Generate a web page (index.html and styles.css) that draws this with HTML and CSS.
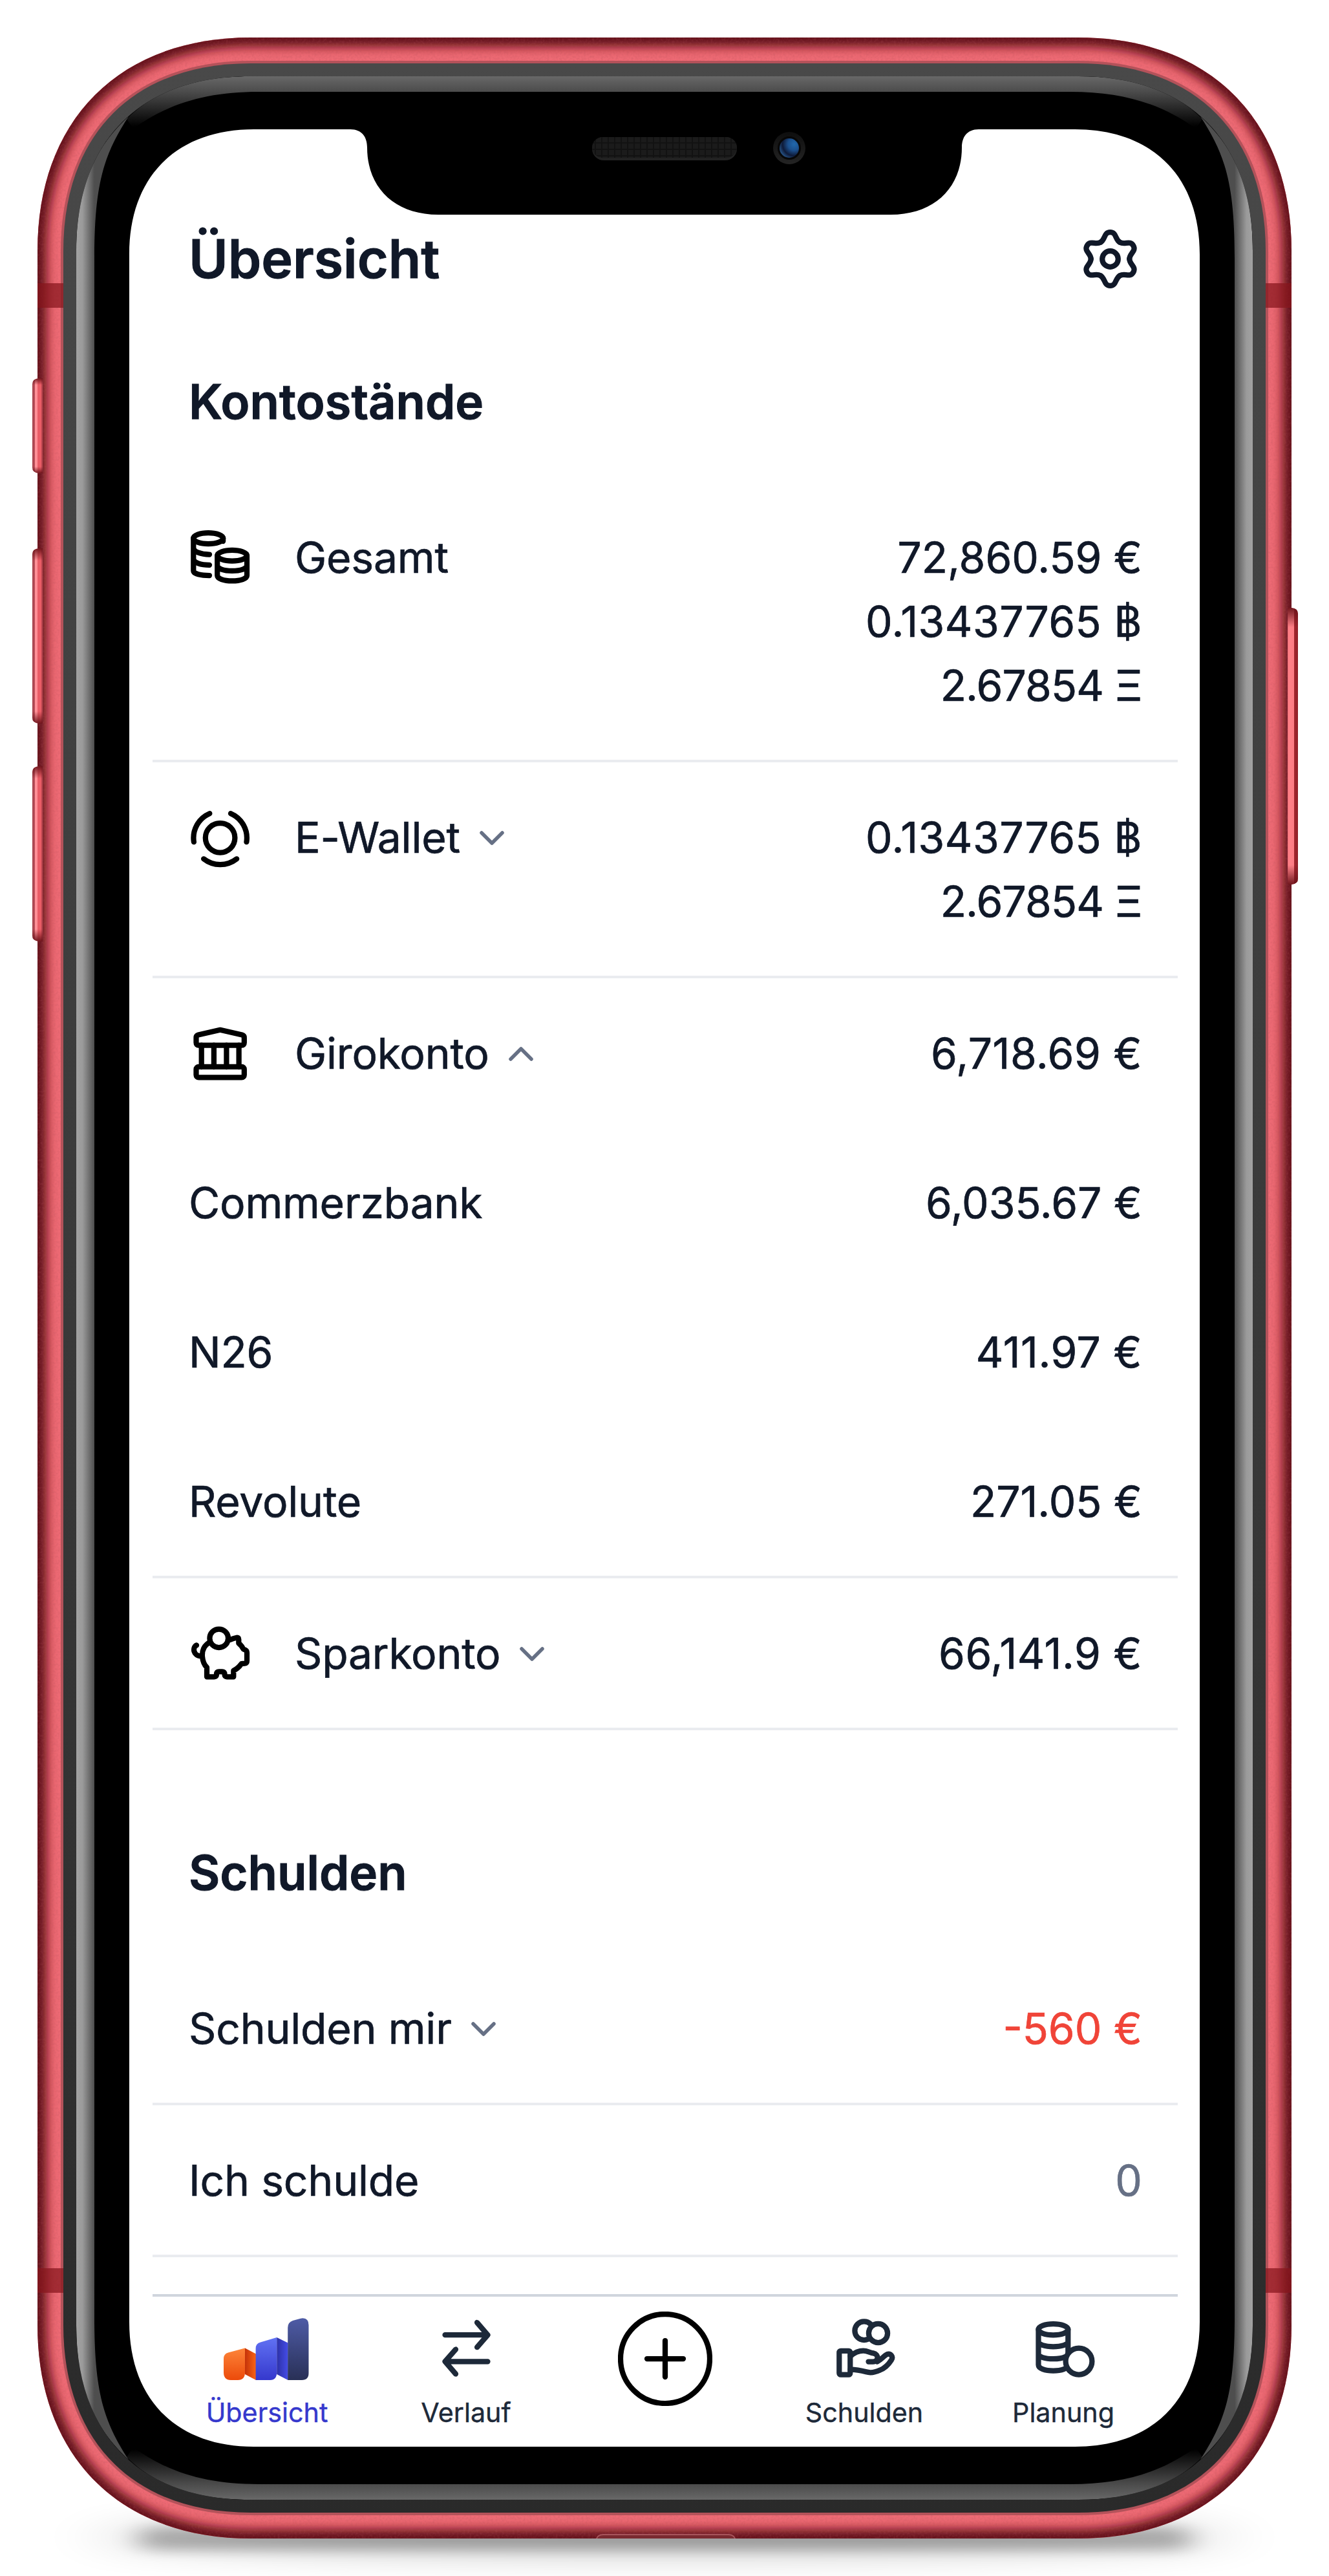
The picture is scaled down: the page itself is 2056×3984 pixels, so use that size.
FILE: index.html
```html
<!DOCTYPE html>
<html lang="de">
<head>
<meta charset="utf-8">
<title>Übersicht</title>
<link rel="stylesheet" href="styles.css">
</head>
<body>
<div class="device">
  <svg class="device-frame" viewBox="0 0 2056 3984" aria-hidden="true">
    <defs>
      <path id="outer" d="M388 58H1668C1871 58 1998 185 1998 388V3596C1998 3799 1871 3926 1668 3926H388C185 3926 58 3799 58 3596V388C58 185 185 58 388 58Z"/>
      <path id="bezel" d="M388 98H1668C1849 98 1958 207 1958 388V3596C1958 3777 1849 3886 1668 3886H388C207 3886 98 3777 98 3596V388C98 207 207 98 388 98Z"/>
      <path id="rim" d="M388 118H1668C1839 118 1938 217 1938 388V3596C1938 3767 1839 3866 1668 3866H388C217 3866 118 3767 118 3596V388C118 217 217 118 388 118Z"/>
      <clipPath id="outerClip"><use href="#outer"/></clipPath>
      <clipPath id="rimClip"><use href="#rim"/></clipPath>
      <filter id="soft" x="-5%" y="-5%" width="110%" height="110%"><feGaussianBlur stdDeviation="8"/></filter>
      <filter id="shadowNear" x="-10%" y="-200%" width="120%" height="500%"><feGaussianBlur stdDeviation="22 9"/></filter>
      <filter id="shadowFar" x="-20%" y="-200%" width="140%" height="500%"><feGaussianBlur stdDeviation="50 24"/></filter>
      <filter id="grain" x="0" y="0" width="100%" height="100%">
        <feTurbulence type="fractalNoise" baseFrequency="0.3" numOctaves="2" seed="4"/>
        <feColorMatrix values="0 0 0 0 0.45  0 0 0 0 0.08  0 0 0 0 0.1  1.6 0 0 0 -0.65"/>
      </filter>
      <linearGradient id="bezelFill" x1="0" y1="0" x2="0" y2="1"><stop offset="0" stop-color="#494949"/><stop offset="1" stop-color="#2a2a2a"/></linearGradient>
      <linearGradient id="glareLeft" gradientUnits="userSpaceOnUse" x1="118" y1="0" x2="146" y2="0"><stop offset="0" stop-color="#a2a2a2"/><stop offset=".35" stop-color="#9a9a9a"/><stop offset="1" stop-color="#4e4e4e"/></linearGradient>
      <linearGradient id="glareRight" gradientUnits="userSpaceOnUse" x1="1938" y1="0" x2="1910" y2="0"><stop offset="0" stop-color="#a2a2a2"/><stop offset=".35" stop-color="#9a9a9a"/><stop offset="1" stop-color="#4e4e4e"/></linearGradient>
      <linearGradient id="glareTop" gradientUnits="userSpaceOnUse" x1="0" y1="118" x2="0" y2="196"><stop offset="0" stop-color="#686868"/><stop offset=".32" stop-color="#4a4a4a"/><stop offset="1" stop-color="#000"/></linearGradient>
      <linearGradient id="glareBottom" gradientUnits="userSpaceOnUse" x1="0" y1="3866" x2="0" y2="3788"><stop offset="0" stop-color="#686868"/><stop offset=".32" stop-color="#4a4a4a"/><stop offset="1" stop-color="#000"/></linearGradient>
      <linearGradient id="keyLeft" x1="0" y1="0" x2="1" y2="0"><stop offset="0" stop-color="#a5404a"/><stop offset=".22" stop-color="#b8505a"/><stop offset=".26" stop-color="#ff9299"/><stop offset=".48" stop-color="#ff8f96"/><stop offset=".52" stop-color="#ea5c66"/><stop offset=".85" stop-color="#ea5c66"/><stop offset=".9" stop-color="#b9454e"/><stop offset="1" stop-color="#b9454e"/></linearGradient>
      <linearGradient id="keyRight" x1="0" y1="0" x2="1" y2="0"><stop offset="0" stop-color="#f0737b"/><stop offset=".15" stop-color="#ff8087"/><stop offset=".6" stop-color="#fb7c84"/><stop offset=".63" stop-color="#a3262e"/><stop offset="1" stop-color="#8f2028"/></linearGradient>
      <linearGradient id="keyEnds" x1="0" y1="0" x2="0" y2="1"><stop offset="0" stop-color="#6b1219" stop-opacity=".95"/><stop offset=".07" stop-color="#6b1219" stop-opacity="0"/><stop offset=".93" stop-color="#6b1219" stop-opacity="0"/><stop offset="1" stop-color="#6b1219" stop-opacity=".95"/></linearGradient>
      <radialGradient id="lens" cx=".75" cy=".3" r=".8"><stop offset="0" stop-color="#2168ac"/><stop offset=".4" stop-color="#1c4f8c"/><stop offset=".75" stop-color="#0e1a38"/><stop offset="1" stop-color="#255082"/></radialGradient>
      <linearGradient id="ring" x1="0" y1="0" x2="0" y2="1"><stop offset="0" stop-color="#0e0e0e"/><stop offset="1" stop-color="#242424"/></linearGradient>
      <pattern id="mesh" width="10" height="10" patternUnits="userSpaceOnUse"><rect width="10" height="10" fill="#1b1b1b"/><path d="M0 0H10M0 0V10" stroke="#121212" stroke-width="4"/></pattern>
    </defs>

    <ellipse cx="1028" cy="3924" rx="880" ry="30" fill="#000" opacity=".2" filter="url(#shadowFar)"/>
    <rect x="215" y="3908" width="1626" height="36" rx="16" fill="#000" opacity=".26" filter="url(#shadowNear)"/>

    <use href="#outer" fill="#ee6a74"/>
    <g clip-path="url(#outerClip)">
      <use href="#outer" fill="none" stroke="#5f0d15" stroke-width="28" filter="url(#soft)"/>
      <rect width="2056" height="3984" filter="url(#grain)" opacity=".3"/>
      <use href="#bezel" fill="none" stroke="#b4525a" stroke-width="8"/>
      <path d="M58 438h42v38H58zM1956 438h42v38h-42zM58 3508h42v38H58zM1956 3508h42v38h-42z" fill="#86151c" opacity=".72"/>
      <rect x="923" y="3920" width="214" height="14" rx="10" fill="#7a2a30" stroke="#a8555c" stroke-width="2"/>
    </g>
    <use href="#bezel" fill="url(#bezelFill)"/>
    <use href="#rim"/>
    <g clip-path="url(#rimClip)">
      <path d="M388 118C300 118 240 140 196 184L206 199C260 160 320 142 400 142H1656C1736 142 1796 160 1850 199L1860 184C1816 140 1756 118 1668 118Z" fill="url(#glareTop)"/>
      <path d="M388 3866C300 3866 240 3844 196 3800L206 3785C260 3824 320 3842 400 3842H1656C1736 3842 1796 3824 1850 3785L1860 3800C1816 3844 1756 3866 1668 3866Z" fill="url(#glareBottom)"/>
      <path d="M118 388C118 290 145 230 199 180C160 240 146 285 146 400V3584C146 3699 160 3744 199 3804C145 3754 118 3694 118 3596Z" fill="url(#glareLeft)"/>
      <path d="M1938 388C1938 290 1911 230 1857 180C1896 240 1910 285 1910 400V3584C1910 3699 1896 3744 1857 3804C1911 3754 1938 3694 1938 3596Z" fill="url(#glareRight)"/>
    </g>

    <g>
      <path d="M66 585H60Q50 586 50 594V723Q50 731 60 732H66Z" fill="url(#keyLeft)"/>
      <path d="M66 585H60Q50 586 50 594V723Q50 731 60 732H66Z" fill="url(#keyEnds)"/>
      <path d="M66 848H60Q50 849 50 857V1110Q50 1118 60 1119H66Z" fill="url(#keyLeft)"/>
      <path d="M66 848H60Q50 849 50 857V1110Q50 1118 60 1119H66Z" fill="url(#keyEnds)"/>
      <path d="M66 1185H60Q50 1186 50 1194V1447Q50 1455 60 1456H66Z" fill="url(#keyLeft)"/>
      <path d="M66 1185H60Q50 1186 50 1194V1447Q50 1455 60 1456H66Z" fill="url(#keyEnds)"/>
      <path d="M1992 940H1998Q2008 941 2008 949V1359Q2008 1367 1998 1368H1992Z" fill="url(#keyRight)"/>
      <path d="M1992 940H1998Q2008 941 2008 949V1359Q2008 1367 1998 1368H1992Z" fill="url(#keyEnds)"/>
    </g>

    <path d="M393 200H542C560 200 568 212 568 228C568 290 610 332 678 332H1378C1446 332 1488 290 1488 228C1488 212 1496 200 1514 200H1663C1783 200 1856 273 1856 393V3591C1856 3711 1783 3784 1663 3784H393C273 3784 200 3711 200 3591V393C200 273 273 200 393 200Z" fill="#fff"/>

    <rect x="916" y="212" width="224" height="36" rx="18" fill="#222"/>
    <rect x="916" y="212" width="224" height="32" rx="16" fill="url(#mesh)"/>
    <circle cx="1221" cy="229" r="25" fill="url(#ring)"/>
    <circle cx="1221" cy="229" r="18" fill="#070707"/>
    <circle cx="1221" cy="229" r="15" fill="url(#lens)"/>
  </svg>

  <svg class="sprite" aria-hidden="true">
    <symbol id="i-cog" viewBox="0 0 99 99">
      <g transform="translate(49.5 49.5)">
        <circle r="12.3"/>
        <path id="lobe" d="M-14.9 -25.8C-7.4 -30.1 -10 -41.3 0 -41.3S7.4 -30.1 14.9 -25.8"/>
        <use href="#lobe" transform="rotate(60)"/><use href="#lobe" transform="rotate(120)"/><use href="#lobe" transform="rotate(180)"/><use href="#lobe" transform="rotate(240)"/><use href="#lobe" transform="rotate(300)"/>
      </g>
    </symbol>
    <symbol id="i-coins" viewBox="0 0 99 99">
      <ellipse cx="31.2" cy="19.6" rx="23" ry="8.6"/>
      <path d="M8.3 19.6V70C8.3 74.5 20 77 33 77M54.1 19.6V24M8.3 34C8.3 40.5 20 44.5 33 44.5M8.3 51C8.3 57.5 20 60.8 33 60.8"/>
      <ellipse cx="68.1" cy="46.2" rx="22.9" ry="8.3"/>
      <path d="M45.2 46.2V77C45.2 82 55 85.4 68.1 85.4S91 82 91 77V46.2M45.2 61.5C45.2 66.5 55 69.8 68.1 69.8S91 66.5 91 61.5"/>
    </symbol>
    <symbol id="i-wallet" viewBox="0 0 99 99">
      <circle cx="49.6" cy="49.8" r="22.8"/>
      <path d="M33.3 12.2A41.2 41.2 0 0 0 8.9 56.2M66 12.2A41.2 41.2 0 0 1 90.4 56.2M24.1 82.3A41.2 41.2 0 0 0 75.2 82.3"/>
    </symbol>
    <symbol id="i-bank" viewBox="0 0 99 99">
      <path d="M12.5 24.8Q12.5 21.5 15.8 20.6L49.6 12.8L83.4 20.6Q86.8 21.5 86.8 24.8V32.6Q86.8 36.6 82.8 36.6H16.5Q12.5 36.6 12.5 32.6Z"/>
      <path d="M20.7 36.6V70M39.9 36.6V70M59.4 36.6V70M78.6 36.6V70"/>
      <rect x="12.5" y="69.8" width="74.3" height="16.6" rx="4"/>
    </symbol>
    <symbol id="i-pig" viewBox="0 0 99 99">
      <circle cx="47.7" cy="25.8" r="14.3"/>
      <path d="M13 36.5C6.5 39.5 7.5 53.5 20.7 53.5M32 32.8C25 37 21.3 45 22 54C22.7 62 25 67 29 70.8V85.3H40.5Q44 85.3 44 81.8V81Q44 77.3 47.7 77.3H52.7Q56.5 77.3 56.5 81V81.8Q56.5 85.3 60 85.3H70.3V75.8C76 73 80 68.5 82.5 65.2L87.5 64.7Q91 64.2 91 60.7V48Q91 44.8 88 43.5L85.5 42.5C84 39 81.5 36 78.3 33.5V27.5Q78.3 24.3 75.2 24.8Q70 25.8 65 28"/>
    </symbol>
    <symbol id="i-transfer" viewBox="0 0 99 99">
      <path d="M16.5 29.2H82.5M66 10L82.5 29.2L66 48.2M82.5 70.3H16.5M33 51.5L16.5 70.3L33 89.5"/>
    </symbol>
    <symbol id="i-hand" viewBox="0 0 99 99">
      <circle cx="48.8" cy="22.7" r="14.4"/>
      <circle cx="70.5" cy="26.4" r="14.6" fill="#fff"/>
      <rect x="10.3" y="53.8" width="17" height="36.9" rx="2.5"/>
      <path d="M27.5 62C34 56.5 40.5 53.7 47.5 53.7C53.5 53.7 58 56.5 63 57.4C72 59 71.5 70.5 62.5 70.5H55.5M69 70.5C76 67 80.5 60.5 84.5 59C90 57.5 94.5 63 91 68C86.5 75 80 81 73.5 83.5C66 87 58.5 88.3 52 86.3C44 84 37 82.5 27.5 82.5"/>
    </symbol>
    <symbol id="i-plan" viewBox="0 0 99 99">
      <ellipse cx="33.4" cy="20.7" rx="22.9" ry="8.6"/>
      <path d="M10.5 20.7V75.5C10.5 81 20.5 84.5 33.4 84.5S56.3 81 56.3 75.5V20.7M10.5 40C10.5 44 20.5 47.3 33.4 47.3S56.3 44 56.3 40M10.5 59C10.5 63 20.5 66.2 33.4 66.2C42 66.2 48 65 52 63"/>
      <circle cx="73" cy="70.1" r="20.4" fill="#fff"/>
    </symbol>
    <symbol id="i-down" viewBox="0 0 50 50"><path d="M9 17L25 33L41 17"/></symbol>
    <symbol id="i-up" viewBox="0 0 50 50"><path d="M9 33L25 17L41 33"/></symbol>
  </svg>

  <main class="screen">
    <header class="topbar">
      <h1>Übersicht</h1>
      <svg class="icon"><use href="#i-cog"/></svg>
    </header>

    <section class="group">
      <h2>Kontostände</h2>
      <ul class="list">
        <li class="row">
          <svg class="icon row-icon"><use href="#i-coins"/></svg><span class="label">Gesamt</span>
          <div class="amounts"><span>72,860.59 €</span><span class="wide">0.13437765 ฿</span><span class="narrow">2.67854 Ξ</span></div>
        </li>
        <li class="row">
          <svg class="icon row-icon"><use href="#i-wallet"/></svg><span class="label">E-Wallet</span><svg class="chevron"><use href="#i-down"/></svg>
          <div class="amounts"><span class="wide">0.13437765 ฿</span><span class="narrow">2.67854 Ξ</span></div>
        </li>
        <li class="row open">
          <svg class="icon row-icon"><use href="#i-bank"/></svg><span class="label">Girokonto</span><svg class="chevron"><use href="#i-up"/></svg>
          <div class="amounts"><span class="wide">6,718.69 €</span></div>
        </li>
        <li class="row open"><span class="label">Commerzbank</span><div class="amounts"><span>6,035.67 €</span></div></li>
        <li class="row open"><span class="label">N26</span><div class="amounts"><span class="wide">411.97 €</span></div></li>
        <li class="row"><span class="label">Revolute</span><div class="amounts"><span>271.05 €</span></div></li>
        <li class="row">
          <svg class="icon row-icon"><use href="#i-pig"/></svg><span class="label">Sparkonto</span><svg class="chevron"><use href="#i-down"/></svg>
          <div class="amounts"><span class="wide">66,141.9 €</span></div>
        </li>
      </ul>
    </section>

    <section class="group debts">
      <h2>Schulden</h2>
      <ul class="list">
        <li class="row"><span class="label">Schulden mir</span><svg class="chevron"><use href="#i-down"/></svg><div class="amounts negative"><span>-560 €</span></div></li>
        <li class="row"><span class="label">Ich schulde</span><div class="amounts muted"><span>0</span></div></li>
      </ul>
    </section>

    <nav class="tabs">
      <a class="tab active">
        <svg class="logo" viewBox="345 3582 132 99">
          <defs>
            <linearGradient id="g1" x1="0" y1="0" x2="0" y2="1"><stop stop-color="#fd853a"/><stop offset="1" stop-color="#ec4a0a"/></linearGradient>
            <linearGradient id="g2"><stop stop-color="#c4320a"/><stop offset="1" stop-color="#fb6514"/></linearGradient>
            <linearGradient id="g3" x1="0" y1="0" x2="0" y2="1"><stop stop-color="#6172f3"/><stop offset="1" stop-color="#3538cd"/></linearGradient>
            <linearGradient id="g4"><stop stop-color="#2d31a6"/><stop offset="1" stop-color="#444ce7"/></linearGradient>
            <linearGradient id="g5" x1="0" y1="0" x2="0" y2="1"><stop stop-color="#4e5ba6"/><stop offset="1" stop-color="#293056"/></linearGradient>
          </defs>
          <path fill="url(#g2)" d="M378 3631.5L395 3640.5V3681L378 3672Z"/>
          <path fill="url(#g1)" d="M345 3648Q345 3640.5 352 3638.5L378 3631.5V3669Q378 3681 367 3681H356Q345 3681 345 3669Z"/>
          <path fill="url(#g4)" d="M427.2 3615L444.5 3623.5V3681L427.2 3672Z"/>
          <path fill="url(#g3)" d="M394.6 3632Q394.6 3624.5 402 3622.5L427.2 3615V3669Q427.2 3681 417 3681H394.6Z"/>
          <path fill="url(#g5)" d="M444.2 3600Q444.2 3591.5 452 3589L464 3585.7Q476.5 3583.5 476.5 3596V3670Q476.5 3681 466 3681H444.2Z"/>
        </svg>
        <span>Übersicht</span>
      </a>
      <a class="tab"><svg class="icon"><use href="#i-transfer"/></svg><span>Verlauf</span></a>
      <a class="tab add"><svg viewBox="0 0 146 146"><circle cx="73" cy="73" r="69"/><path d="M45 73H101M73 45V101"/></svg></a>
      <a class="tab"><svg class="icon"><use href="#i-hand"/></svg><span>Schulden</span></a>
      <a class="tab"><svg class="icon"><use href="#i-plan"/></svg><span>Planung</span></a>
    </nav>
  </main>
</div>
</body>
</html>
```
FILE: styles.css
```css
* { box-sizing: border-box; }

body {
  margin: 0;
  background: #fff;
  color: #101828;
  font-family: Inter, "Noto Sans", sans-serif;
  font-size: 66px;
  line-height: 99px;
  -webkit-text-stroke: .7px currentColor;
}

.device {
  position: relative;
  width: 2056px;
  height: 3984px;
  padding: 200px;
  overflow: hidden;
}

/* phone hardware sits behind the screen content */
.device-frame {
  position: absolute;
  inset: 0;
  width: 2056px;
  height: 3984px;
}

.sprite { position: absolute; width: 0; height: 0; }

.screen {
  position: relative;
  display: flex;
  flex-direction: column;
  height: 3584px;
  padding: 138px 34px 0 36px;
}

.topbar {
  display: flex;
  align-items: center;
  justify-content: space-between;
  height: 124px;
  padding: 0 55px 0 56px;
}

h1 {
  margin: 0;
  font-size: 82.5px;
  line-height: 124px;
  font-weight: 600;
}

h2 {
  margin: 0;
  padding-left: 56px;
  font-size: 74.25px;
  line-height: 111px;
  font-weight: 600;
}

h1, h2 { -webkit-text-stroke-width: 1px; }

.group { padding-top: 104px; }
.debts { padding-top: 165px; }

.list {
  margin: 69px 0 0;
  padding: 0;
  list-style: none;
}

.row {
  display: flex;
  align-items: flex-start;
  padding: 67px 55px 65px 56px;
  border-bottom: 4px solid #eaecf0;
}

.row.open { border-bottom: 0; }

.label { letter-spacing: -.2px; }

.icon {
  width: 99px;
  height: 99px;
  flex: none;
  fill: none;
  stroke: currentColor;
  stroke-width: 8.25;
  stroke-linecap: round;
  stroke-linejoin: round;
}

.row-icon {
  margin-left: -1px;
  margin-right: 66px;
  stroke: #000;
}

.chevron {
  width: 50px;
  height: 50px;
  margin: 25px 0 0 24px;
  fill: none;
  stroke: #667085;
  stroke-width: 5.5;
  stroke-linecap: round;
  stroke-linejoin: round;
}

.amounts {
  display: flex;
  flex-direction: column;
  align-items: flex-end;
  margin-left: auto;
}

.wide { letter-spacing: .5px; }
.narrow { letter-spacing: -.9px; }

.negative { color: #f04438; }
.muted { color: #667085; }

.tabs {
  display: grid;
  grid-template-columns: repeat(5, 308px);
  justify-content: center;
  margin-top: 57px;
  padding-top: 30px;
  border-top: 4px solid #d0d5dd;
  color: #1d2939;
  -webkit-text-stroke-width: .4px;
}

.tab {
  display: flex;
  flex-direction: column;
  align-items: center;
  font-size: 41.25px;
  line-height: 62px;
}

.tab span { margin-top: 19px; }
.tab.active { color: #3538cd; }

.logo { width: 132px; height: 99px; margin-left: -3px; }

.add svg {
  width: 146px;
  height: 146px;
  margin-top: -7px;
  fill: none;
  stroke: #000;
  stroke-width: 8.25;
  stroke-linecap: round;
}
```
